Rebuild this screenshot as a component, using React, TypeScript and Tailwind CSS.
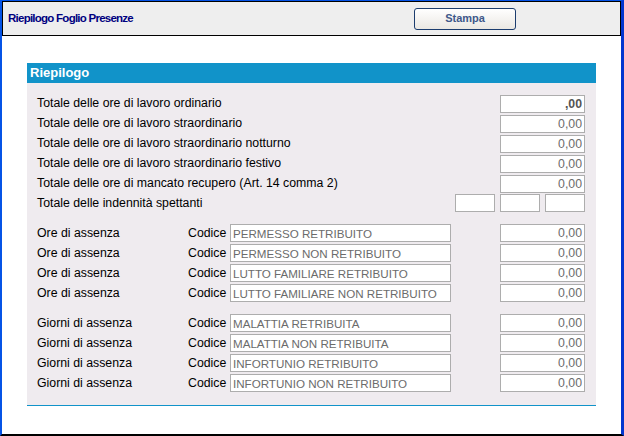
import type { FC } from "react";

const font = "font-['Liberation_Sans',Arial,sans-serif]";

const ValueBox: FC<{ value?: string; bold?: boolean; width?: string }> = ({
  value = "",
  bold,
  width = "w-[85px]",
}) => (
  <input
    readOnly
    value={value}
    className={`${width} h-[18px] shrink-0 border border-[#adadad] bg-white px-[2px] text-right text-[12.3px] leading-none outline-none ${font} ${
      bold ? "font-bold text-[#555]" : "text-[#6b6b6b]"
    }`}
  />
);

const totals = [
  { label: "Totale delle ore di lavoro ordinario", value: ",00", bold: true },
  { label: "Totale delle ore di lavoro straordinario", value: "0,00" },
  { label: "Totale delle ore di lavoro straordinario notturno", value: "0,00" },
  { label: "Totale delle ore di lavoro straordinario festivo", value: "0,00" },
  { label: "Totale delle ore di mancato recupero (Art. 14 comma 2)", value: "0,00" },
];

const ore = [
  "PERMESSO RETRIBUITO",
  "PERMESSO NON RETRIBUITO",
  "LUTTO FAMILIARE RETRIBUITO",
  "LUTTO FAMILIARE NON RETRIBUITO",
];

const giorni = [
  "MALATTIA RETRIBUITA",
  "MALATTIA NON RETRIBUITA",
  "INFORTUNIO RETRIBUITO",
  "INFORTUNIO NON RETRIBUITO",
];

const AssenzaRow: FC<{ label: string; codice: string }> = ({ label, codice }) => (
  <div className="flex h-[18px] items-center">
    <div className="w-[151px] shrink-0">{label}</div>
    <div className="w-[42px] shrink-0">Codice</div>
    <input
      readOnly
      value={codice}
      className={`h-[18px] w-[221px] shrink-0 border border-[#adadad] bg-white px-[2px] text-[11.6px] leading-none text-[#6b6b6b] outline-none ${font}`}
    />
    <div className="flex-1" />
    <ValueBox value="0,00" />
  </div>
);

export default function App() {
  return (
    <div
      className={`flex h-[436px] w-[624px] flex-col border-b-2 border-l-2 border-r-[3px] border-t border-b-black border-l-[#0553e6] border-r-[#0336cf] border-t-[#0553e6] bg-white ${font}`}
    >
      <div className="flex h-[35px] shrink-0 items-center border border-black bg-[#eeeeee] pl-[5px]">
        <div className="w-[406px] text-[11.5px] font-bold tracking-[-0.75px] text-[#000080]">
          Riepilogo Foglio Presenze
        </div>
        <button className="h-[22px] w-[102px] rounded-[3px] border border-[#1c3d6e] bg-gradient-to-b from-white to-[#ebe8e2] text-[11px] font-bold text-[#3f5889]">
          Stampa
        </button>
      </div>

      <div className="flex-1 pl-[25px] pt-[27px]">
        <div className="w-[569px]">
          <div className="flex h-[20px] items-center bg-[#1193c9] pl-[3px] text-[13px] font-bold text-white">
            Riepilogo
          </div>
          <div className="flex flex-col gap-[2px] bg-[#efebef] pb-[13px] pl-[10px] pr-[11px] pt-[11px] text-[12.3px] text-black">
            {totals.map((t) => (
              <div key={t.label} className="flex h-[18px] items-center pt-px">
                <div className="flex-1">{t.label}</div>
                <ValueBox value={t.value} bold={t.bold} />
              </div>
            ))}
            <div className="flex h-[18px] items-center gap-[5px]">
              <div className="flex-1">Totale delle indennità spettanti</div>
              <ValueBox width="w-[40px]" />
              <ValueBox width="w-[40px]" />
              <ValueBox width="w-[40px]" />
            </div>

            <div className="mt-[10px] flex flex-col gap-[2px]">
              {ore.map((c) => (
                <AssenzaRow key={c} label="Ore di assenza" codice={c} />
              ))}
            </div>

            <div className="mt-[10px] flex flex-col gap-[2px]">
              {giorni.map((c) => (
                <AssenzaRow key={c} label="Giorni di assenza" codice={c} />
              ))}
            </div>
          </div>
          <div className="h-px bg-[#1193c9]" />
        </div>
      </div>
    </div>
  );
}
